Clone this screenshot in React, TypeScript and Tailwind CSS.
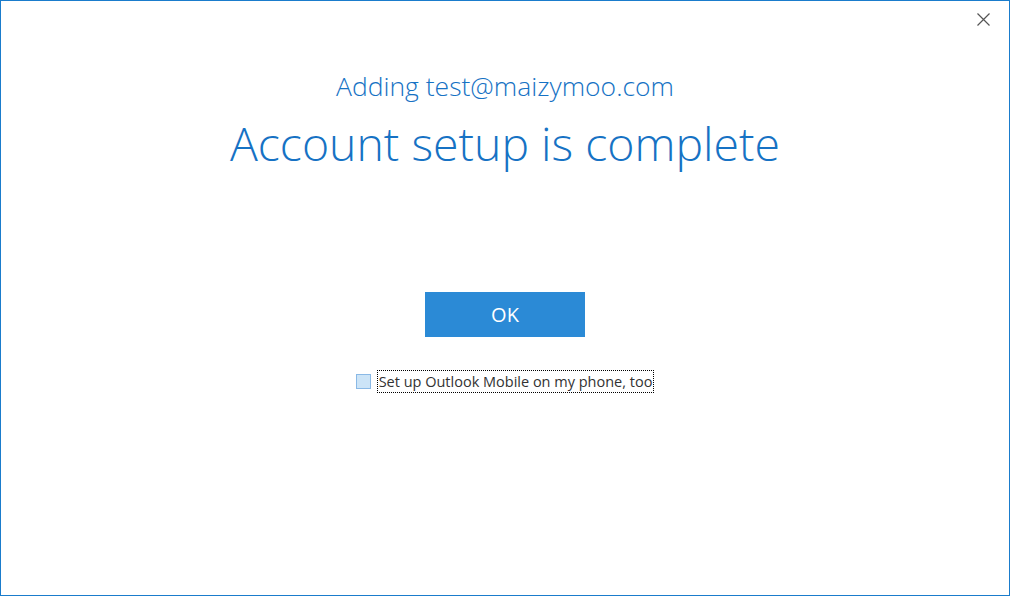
export default function App() {
  return (
    <div className="w-[1010px] h-[596px] bg-white border border-[#1a7ccc] flex flex-col items-center relative font-['Open_Sans',sans-serif]">
      {/* close button */}
      <button className="absolute top-[10px] right-[18px] w-[16px] h-[16px] flex items-center justify-center">
        <svg width="13" height="13" viewBox="0 0 13 13" stroke="#555" strokeWidth="1.2" fill="none">
          <path d="M0.5 0.5L12.5 12.5M12.5 0.5L0.5 12.5" />
        </svg>
      </button>

      <div className="mt-[68px] text-[26.5px] leading-[34px] font-light text-[#1672c4]">
        Adding test@maizymoo.com
      </div>
      <div className="mt-[9px] text-[46.4px] leading-[62px] font-light text-[#1672c4]">
        Account setup is complete
      </div>

      <button className="mt-[118px] w-[160px] h-[45px] bg-[#2b8ad6] text-white text-[20px] font-normal">
        OK
      </button>

      <label className="mt-[33px] flex items-center gap-[6px] text-[14.5px] text-[#333]">
        <span className="w-[15px] h-[15px] bg-[#cce4f7] border border-[#8ab9e6]" />
        <span className="border border-dotted border-black px-[1px] leading-[21px]">
          Set up Outlook Mobile on my phone, too
        </span>
      </label>
    </div>
  )
}
